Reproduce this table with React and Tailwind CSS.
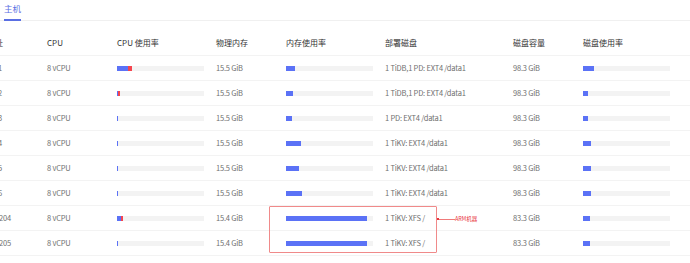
import React from "react";

const rows = [
  { ip: "1", ipMl: "-ml-[2px]", cpu: [11, 4], mem: "15.5 GiB", memBar: 9, disk: "1 TiDB,1 PD: EXT4 /data1", cap: "98.3 GiB", diskBar: 11 },
  { ip: "2", ipMl: "-ml-[2px]", cpu: [1, 2], mem: "15.5 GiB", memBar: 7, disk: "1 TiDB,1 PD: EXT4 /data1", cap: "98.3 GiB", diskBar: 5 },
  { ip: "3", ipMl: "-ml-[2px]", cpu: [1, 0], mem: "15.5 GiB", memBar: 6, disk: "1 PD: EXT4 /data1", cap: "98.3 GiB", diskBar: 5 },
  { ip: "4", ipMl: "-ml-[2px]", cpu: [1, 0], mem: "15.5 GiB", memBar: 15, disk: "1 TiKV: EXT4 /data1", cap: "98.3 GiB", diskBar: 8 },
  { ip: "5", ipMl: "-ml-[2px]", cpu: [1, 0], mem: "15.5 GiB", memBar: 13, disk: "1 TiKV: EXT4 /data1", cap: "98.3 GiB", diskBar: 8 },
  { ip: "6", ipMl: "-ml-[2px]", cpu: [1, 0], mem: "15.5 GiB", memBar: 16, disk: "1 TiKV: EXT4 /data1", cap: "98.3 GiB", diskBar: 8 },
  { ip: "204", ipMl: "-ml-[1px]", cpu: [4, 2], mem: "15.4 GiB", memBar: 81, disk: "1 TiKV: XFS /", cap: "83.3 GiB", diskBar: 7 },
  { ip: "205", ipMl: "-ml-[1px]", cpu: [1, 0], mem: "15.4 GiB", memBar: 81, disk: "1 TiKV: XFS /", cap: "83.3 GiB", diskBar: 7 },
];

function Bar({ blue, red = 0 }) {
  return (
    <div className="flex h-[5px] w-[87px] bg-[#f3f3f3]">
      <div className="h-full bg-[#5b72f6]" style={{ width: blue }} />
      {red > 0 && <div className="h-full bg-[#f5454f]" style={{ width: red }} />}
    </div>
  );
}

export default function App() {
  return (
    <div
      className="relative h-[263px] w-[690px] overflow-hidden bg-white text-[8px]"
      style={{ fontFamily: '"Noto Sans CJK SC", "Noto Sans", sans-serif' }}
    >
      <div className="flex h-[21px] border-b border-[#f0f0f0]">
        <div className="ml-[4px] -mb-px flex h-[21px] items-center border-b-[2px] border-[#5a6fe3] pb-[3px] text-[8.5px] text-[#5a6fe3]">
          主机
        </div>
      </div>

      <div className="mt-[10px] flex h-[25px] items-center border-b border-[#f3f3f3] text-[#333]">
        <div className="w-[47px] overflow-hidden whitespace-nowrap">
          <span className="-ml-[5px] inline-block">址</span>
        </div>
        <div className="w-[70px]">CPU</div>
        <div className="w-[99px]">CPU 使用率</div>
        <div className="w-[70px]">物理内存</div>
        <div className="w-[99px]">内存使用率</div>
        <div className="w-[128px]">部署磁盘</div>
        <div className="w-[70px]">磁盘容量</div>
        <div className="flex-1">磁盘使用率</div>
      </div>

      {rows.map((r, i) => (
        <div
          key={i}
          className="flex h-[25px] items-center border-b border-[#f3f3f3] text-[7.5px] tracking-[-0.2px] text-[#707070]"
        >
          <div className="w-[47px] overflow-hidden whitespace-nowrap">
            <span className={`${r.ipMl} inline-block`}>{r.ip}</span>
          </div>
          <div className="w-[70px]">8 vCPU</div>
          <div className="w-[99px]">
            <Bar blue={r.cpu[0]} red={r.cpu[1]} />
          </div>
          <div className="w-[70px]">{r.mem}</div>
          <div className="w-[99px]">
            <Bar blue={r.memBar} />
          </div>
          <div className="w-[128px] whitespace-nowrap">{r.disk}</div>
          <div className="w-[70px]">{r.cap}</div>
          <div className="flex-1">
            <Bar blue={r.diskBar} />
          </div>
        </div>
      ))}

      <div className="absolute left-[269px] top-[206px] h-[47px] w-[168px] rounded-[1px] border border-[#f08a8a]" />
      <div className="absolute left-[437px] top-[218px] h-[2px] w-[2px] bg-[#e8343c]" />
      <div className="absolute left-[439px] top-[219px] h-px w-[16px] bg-[#f07a7a]" />
      <div className="absolute left-[455px] top-[214px] text-[5.5px] leading-[10px] text-[#e8343c]">ARM机器</div>
    </div>
  );
}
